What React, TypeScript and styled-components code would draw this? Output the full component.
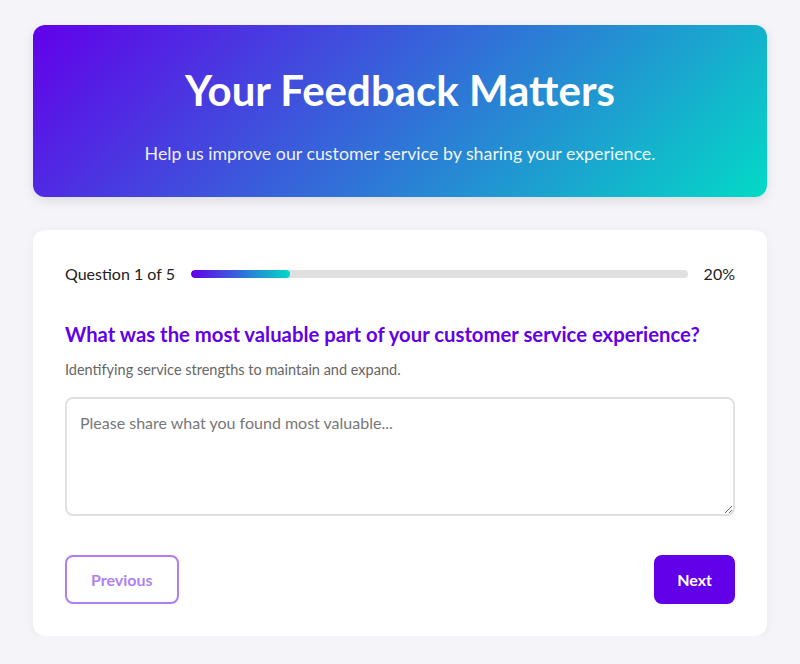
import React, { useState } from 'react'
import styled, { createGlobalStyle } from 'styled-components'

const GlobalStyle = createGlobalStyle`
  * { box-sizing: border-box; }
  body {
    margin: 0;
    background: #f4f4f9;
    font-family: 'Segoe UI', Lato, 'Noto Sans', sans-serif;
    color: #222;
  }
`

const Page = styled.main`
  max-width: 734px;
  margin: 25px auto 0;
  display: flex;
  flex-direction: column;
  gap: 33px;
`

const Header = styled.header`
  background: linear-gradient(135deg, #6200ea 0%, #03dac6 100%);
  border-radius: 12px;
  padding: 40px 32px 33px;
  text-align: center;
  color: #fff;
  box-shadow: 0 4px 12px rgba(0, 0, 0, 0.1);
`

const Title = styled.h1`
  margin: 0 0 27px;
  font-size: 42px;
  font-weight: 700;
  line-height: 1.2;
`

const Subtitle = styled.p`
  margin: 0;
  font-size: 17.8px;
  opacity: 0.92;
`

const Card = styled.section`
  background: #fff;
  border-radius: 12px;
  padding: 32px;
  box-shadow: 0 2px 10px rgba(0, 0, 0, 0.05);
`

const ProgressRow = styled.div`
  display: flex;
  align-items: center;
  gap: 16px;
  font-size: 16px;
  margin-top: 2px;
  margin-bottom: 39px;
`

const Track = styled.div`
  flex: 1;
  height: 8px;
  background: #e0e0e0;
  border-radius: 4px;
  overflow: hidden;
`

const Fill = styled.div`
  height: 100%;
  background: linear-gradient(90deg, #6200ea, #03dac6);
  border-radius: 4px;
`

const Question = styled.h2`
  margin: 0 0 15px;
  font-size: 20.3px;
  font-weight: 700;
  color: #6200ea;
`

const Hint = styled.p`
  margin: 0 0 19px;
  font-size: 14.5px;
  color: #666;
`

const Answer = styled.textarea`
  display: block;
  width: 100%;
  height: 119px;
  padding: 14px 13px;
  border: 2px solid #e0e0e0;
  border-radius: 8px;
  font-family: inherit;
  font-size: 16px;
  color: #222;
  resize: vertical;
  outline: none;
  &::placeholder { color: #777; }
`

const Actions = styled.div`
  display: flex;
  justify-content: space-between;
  margin-top: 39px;
`

const Button = styled.button<{ $primary?: boolean }>`
  height: 49px;
  padding: 0 ${p => (p.$primary ? 21 : 24)}px;
  border-radius: 8px;
  font-family: inherit;
  font-size: 16px;
  font-weight: 700;
  cursor: pointer;
  border: 2px solid #6200ea;
  background: ${p => (p.$primary ? '#6200ea' : '#fff')};
  color: ${p => (p.$primary ? '#fff' : '#6200ea')};
  &:disabled { opacity: 0.5; cursor: default; }
`

export default function App() {
  const [step] = useState(1)
  const total = 5
  return (
    <>
      <GlobalStyle />
      <Page>
        <Header>
          <Title>Your Feedback Matters</Title>
          <Subtitle>Help us improve our customer service by sharing your experience.</Subtitle>
        </Header>
        <Card>
          <ProgressRow>
            <span>Question {step} of {total}</span>
            <Track>
              <Fill style={{ width: `${(step / total) * 100}%` }} />
            </Track>
            <span>{Math.round((step / total) * 100)}%</span>
          </ProgressRow>
          <Question>What was the most valuable part of your customer service experience?</Question>
          <Hint>Identifying service strengths to maintain and expand.</Hint>
          <Answer placeholder="Please share what you found most valuable..." />
          <Actions>
            <Button disabled>Previous</Button>
            <Button $primary>Next</Button>
          </Actions>
        </Card>
      </Page>
    </>
  )
}
